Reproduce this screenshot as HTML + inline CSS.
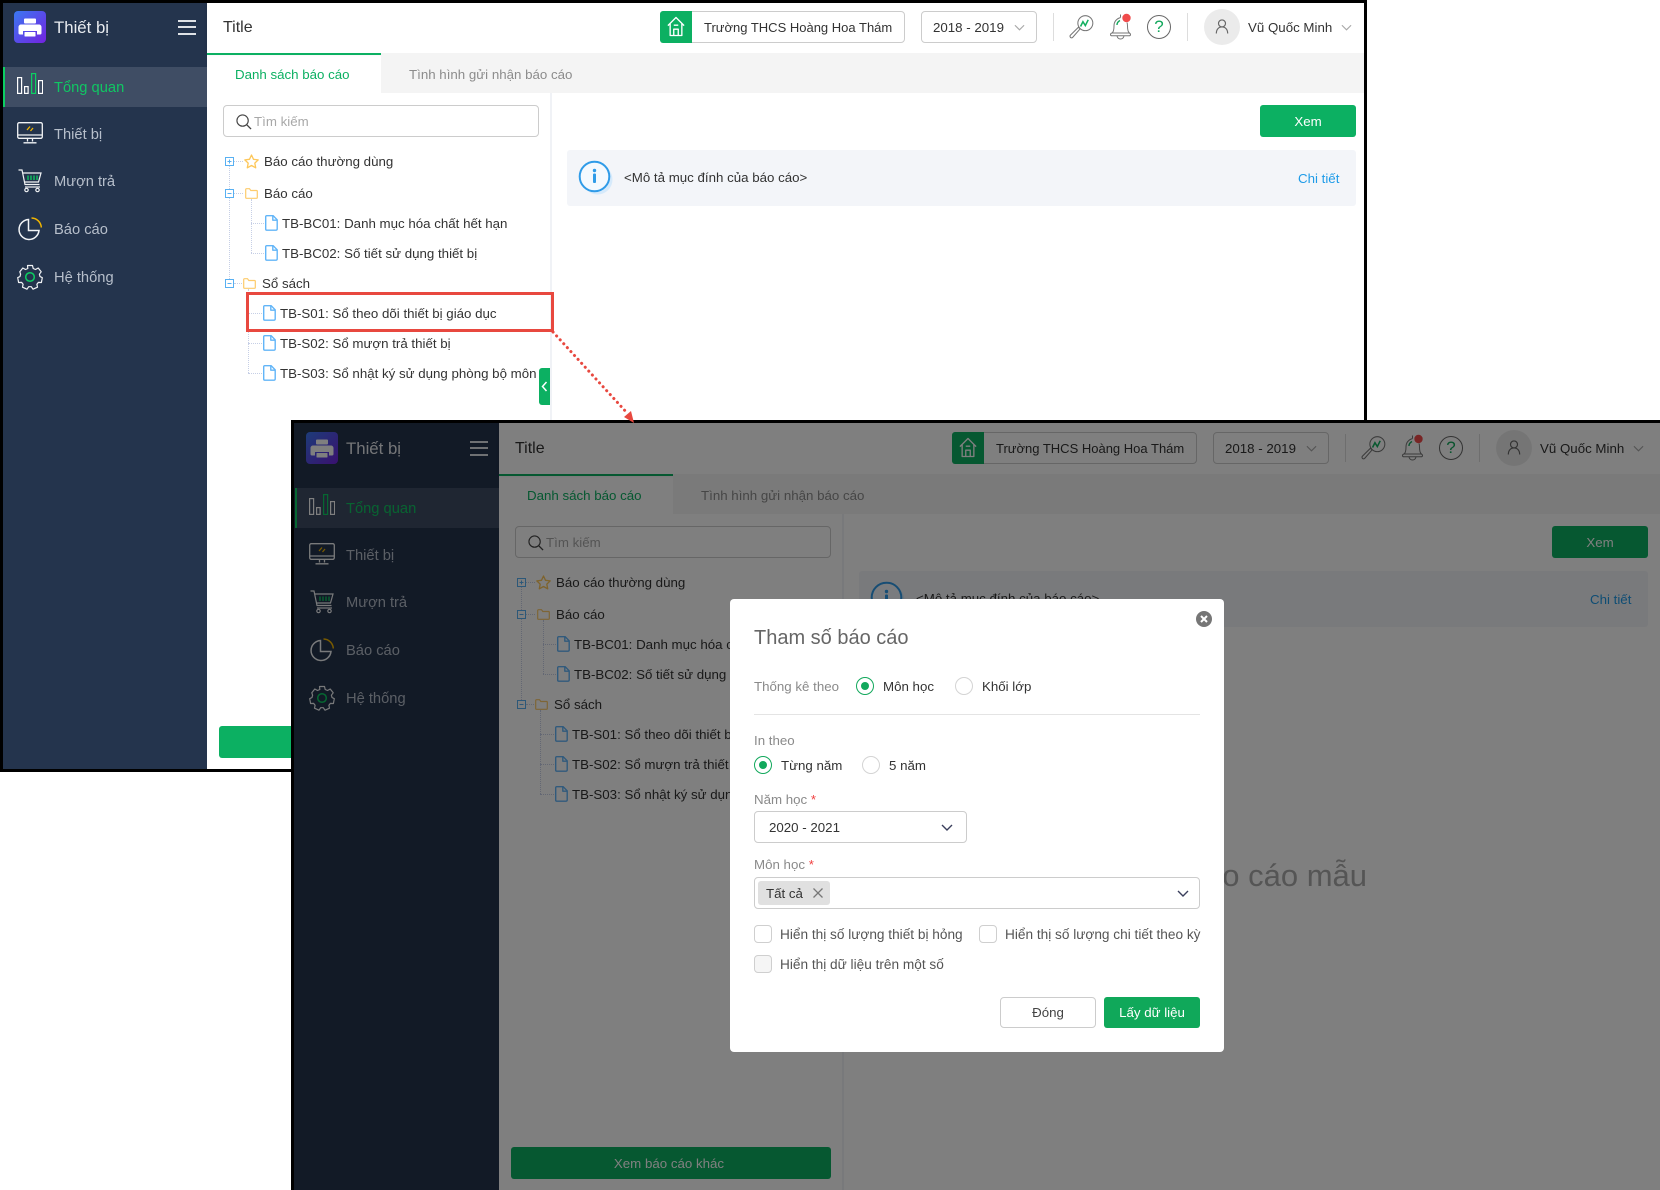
<!DOCTYPE html>
<html lang="vi">
<head>
<meta charset="utf-8">
<title>Thiết bị</title>
<style>
html,body{margin:0;padding:0;background:#fff;}
body{position:relative;width:1660px;height:1190px;overflow:hidden;font-family:"Liberation Sans","Noto Sans CJK SC",sans-serif;font-size:13.3px;color:#333;}
.win{position:absolute;background:#fff;overflow:hidden;}
.a{position:absolute;}
.t{position:absolute;white-space:nowrap;line-height:20px;height:20px;margin-top:1px;}
.side{position:absolute;left:0;top:0;width:207px;height:100%;background:#24344d;}
.row{position:absolute;left:3px;top:67px;width:204px;height:40px;background:#3f4d64;border-left:2px solid #0ccf62;box-sizing:border-box;}
.nav{color:#b7bfcb;font-size:14.7px;left:54px;}
.box{position:absolute;box-sizing:border-box;background:#fff;border:1px solid #ccc;border-radius:4px;}
.btn{position:absolute;background:#0cb062;color:#fff;text-align:center;border-radius:3px;}
.mask{position:absolute;left:0;top:0;width:100%;height:100%;background:rgba(0,0,0,.5);z-index:5;}
.blk{position:absolute;background:#000;z-index:8;}
.radio{position:absolute;box-sizing:border-box;width:18px;height:18px;border:1px solid #d4d4d4;border-radius:50%;background:#fff;}
.radio.on{border:1px solid #12a85c;}
.radio.on:after{content:"";position:absolute;left:4px;top:4px;width:8px;height:8px;border-radius:50%;background:#12a85c;}
.cb{position:absolute;box-sizing:border-box;width:18px;height:18px;border:1px solid #cfcfcf;border-radius:4px;background:#fff;}
.lab{color:#8a8a8a;}
.ck{color:#555;font-size:13.65px;}
</style>
</head>
<body>
<svg width="0" height="0" style="position:absolute">
<defs>
<symbol id="printer" viewBox="0 0 32 32"><rect x="10" y="7.500" width="12" height="5" rx="1" fill="#fff"/><path d="M7 13.500h18a2.500 2.500 0 0 1 2.500 2.500v6a1.500 1.500 0 0 1-1.500 1.500h-3v-3.500H9v3.500H6a1.500 1.500 0 0 1-1.500-1.500v-6A2.500 2.500 0 0 1 7 13.500z" fill="#fff"/><rect x="10.500" y="21" width="11" height="4.500" rx=".5" fill="#fff"/></symbol>
<symbol id="bars" viewBox="0 0 26 21"><g fill="none" stroke-width="1.200"><rect x=".6" y="4.600" width="4" height="15.800" stroke="#fff"/><rect x="7.600" y="13.600" width="3.500" height="6.800" stroke="#fff"/><rect x="14.600" y=".6" width="4" height="19.800" stroke="#0ccf62"/><rect x="21.600" y="7.600" width="4" height="12.800" stroke="#fff"/></g></symbol>
<symbol id="mon" viewBox="0 0 26 22"><g fill="none" stroke="#f2f4f6" stroke-width="1.300"><rect x=".7" y=".7" width="24.600" height="15.600" rx="1.500"/><path d="M.7 13h24.600M10.500 16.500v3M15.500 16.500v3M6.500 20.800h13"/></g><path d="M10 8l3-3.500M13.500 9l2.500-3" stroke="#f0b400" stroke-width="1.300" fill="none"/></symbol>
<symbol id="cart" viewBox="0 0 24 24"><g fill="none" stroke="#f2f4f6" stroke-width="1.200"><path d="M.5 1h3.500l3 14.500h14.500"/><path d="M4.500 4h18.500l-2.500 9H6.500"/><path d="M7 18h15"/><circle cx="8.500" cy="21" r="1.700"/><circle cx="19.500" cy="21" r="1.700"/></g><path d="M10 6.500v4.500M13 6.500v4.500M16 6.500v4.500M19 6.500v4.500" stroke="#0ccf62" stroke-width="1.300"/></symbol>
<symbol id="pie" viewBox="0 0 24 24"><g fill="none" stroke-width="1.500"><path d="M10.500 2.500a10 10 0 1 0 10.500 11H10.500z" stroke="#f2f4f6"/><path d="M13.500 1a10 10 0 0 1 9.800 9.500" stroke="#f0b400"/></g></symbol>
<symbol id="gear" viewBox="0 0 26 26"><path d="M10.500 1.500h5l.7 3 2.300 1 2.700-1.500 3 3.800-1.800 2.400.6 2.300 2.300 1.200-.9 4.800-3-.1-1.500 1.900.6 2.900-4.500 2-1.700-2.500h-2.600l-1.700 2.500-4.500-2 .6-2.900-1.500-1.900-3 .1-.9-4.800 2.300-1.200.6-2.300L2.800 7.800l3-3.800 2.700 1.500 2.300-1z" fill="none" stroke="#f2f4f6" stroke-width="1.200" stroke-linejoin="round"/><circle cx="13" cy="13" r="4.300" fill="none" stroke="#0ccf62" stroke-width="1.500"/></symbol>
<symbol id="file" viewBox="0 0 13 16"><path d="M1.700.7h6.500l4 4.200v9a1.300 1.300 0 0 1-1.300 1.300H1.700A1.200 1.200 0 0 1 .7 14V1.700A1 1 0 0 1 1.700.7zM7.800 1v4.200h4.200" fill="none" stroke="#62b5f8" stroke-width="1.400" stroke-linejoin="round"/></symbol>
<symbol id="folder" viewBox="0 0 13 11"><path d="M.7 1.500A.8.8 0 0 1 1.500.7h3l1.300 1.800h5.700a.8.8 0 0 1 .8.8v6.200a.8.8 0 0 1-.8.8h-10a.8.8 0 0 1-.8-.8z" fill="none" stroke="#fdcb6c" stroke-width="1.200"/></symbol>
<symbol id="star" viewBox="0 0 15 15"><path d="M7.500 1l2 4.300 4.700.6-3.400 3.200.9 4.700-4.200-2.300-4.200 2.300.9-4.700L.8 5.900l4.700-.6z" fill="none" stroke="#fdc75a" stroke-width="1.300" stroke-linejoin="round"/></symbol>
<symbol id="plus" viewBox="0 0 9 9"><rect x=".5" y=".5" width="8" height="8" fill="#fff" stroke="#58b0f2"/><path d="M2.500 4.500h4M4.500 2.500v4" stroke="#58b0f2"/></symbol>
<symbol id="minus" viewBox="0 0 9 9"><rect x=".5" y=".5" width="8" height="8" fill="#fff" stroke="#58b0f2"/><path d="M2.500 4.500h4" stroke="#58b0f2"/></symbol>
<symbol id="home" viewBox="0 0 20 24"><path d="M1 11L10 2l9 9M3.500 9v13h13V9M7.500 22v-7h5v7M7.500 10.500h5" fill="none" stroke="#fff" stroke-width="1.500" stroke-linejoin="round"/></symbol>
<symbol id="chev" viewBox="0 0 12 7"><path d="M1 1l5 5 5-5" fill="none" stroke="#a8a8a8" stroke-width="1.200"/></symbol>
<symbol id="chevd" viewBox="0 0 12 7"><path d="M1 1l5 5 5-5" fill="none" stroke="#3a3f5c" stroke-width="1.400"/></symbol>
<symbol id="key" viewBox="0 0 26 25"><circle cx="17" cy="8.500" r="7.800" fill="none" stroke="#777" stroke-width="1.100"/><path d="M11.500 14.500L9.800 12.800 1.500 21a1.500 1.500 0 0 0 2.300 2.300z" fill="none" stroke="#777" stroke-width="1.100"/><path d="M12 12l2.500-5 2.500 4 3-6" fill="none" stroke="#12b060" stroke-width="1.600"/></symbol>
<symbol id="bell" viewBox="0 0 23 27"><g fill="none" stroke="#777" stroke-width="1"><path d="M3 20c1.500-1 2-3 2-7 0-4 2-7 6.500-8.500M11.500 4.500V1.500"/><path d="M18 9.500c.5 1 .5 2 .5 3.500 0 4 .5 6 2 7"/><path d="M3 20c-2 .5-2 2.800 0 2.800h17c2 0 2-2.300 0-2.800z"/><path d="M8 23c.5 2 2 3 3.500 3s3-1 3.500-3"/></g><path d="M8 12c0-2 1-3.500 3-4.500" fill="none" stroke="#12a85c" stroke-width="1.400"/><circle cx="17.500" cy="5" r="4.200" fill="#f04b4b"/></symbol>
<symbol id="user" viewBox="0 0 16 18"><circle cx="8" cy="5.500" r="4" fill="none" stroke="#666" stroke-width="1.300"/><path d="M1.500 17c0-4.500 2.500-7.500 6.500-7.500s6.500 3 6.500 7.500" fill="none" stroke="#666" stroke-width="1.300"/></symbol>
<symbol id="search" viewBox="0 0 17 17"><circle cx="7" cy="7" r="6" fill="none" stroke="#444" stroke-width="1.200"/><path d="M11.500 11.500l4.500 4.500" stroke="#444" stroke-width="1.400"/></symbol>
<symbol id="info" viewBox="0 0 36 36"><circle cx="19.500" cy="19.500" r="15" fill="#d6eafb"/><circle cx="16.500" cy="16.500" r="14.800" fill="#f4f9fe" stroke="#2f9be8" stroke-width="2"/><circle cx="16.500" cy="10.500" r="1.700" fill="#2f9be8"/><rect x="15" y="13.500" width="3" height="9.500" rx="1" fill="#2f9be8"/></symbol>
</defs>
</svg>

<!-- WINDOW 1 -->
<div class="win" style="left:0;top:0;width:1367px;height:772px;">
  <div class="side">
    <div class="a" style="left:14px;top:11px;width:32px;height:32px;border-radius:4px;background:linear-gradient(135deg,#3a78f2,#7322e0);"><svg width="32" height="32"><use href="#printer"/></svg></div>
    <div class="t" style="left:54px;top:17px;font-size:16.8px;color:#e8ebef;">Thiết bị</div>
    <div class="a" style="left:178px;top:20px;width:18px;height:2px;background:#dfe2e6;"></div>
    <div class="a" style="left:178px;top:26px;width:18px;height:2px;background:#dfe2e6;"></div>
    <div class="a" style="left:178px;top:33px;width:18px;height:2px;background:#dfe2e6;"></div>
    <div class="row"></div>
    <svg class="a" style="left:17px;top:73px" width="26" height="21"><use href="#bars"/></svg>
    <div class="t nav" style="top:77px;color:#10c763;">Tổng quan</div>
    <svg class="a" style="left:17px;top:122px" width="26" height="22"><use href="#mon"/></svg>
    <div class="t nav" style="top:124px;">Thiết bị</div>
    <svg class="a" style="left:18px;top:169px" width="24" height="24"><use href="#cart"/></svg>
    <div class="t nav" style="top:171px;">Mượn trả</div>
    <svg class="a" style="left:18px;top:217px" width="24" height="24"><use href="#pie"/></svg>
    <div class="t nav" style="top:219px;">Báo cáo</div>
    <svg class="a" style="left:17px;top:264px" width="26" height="26"><use href="#gear"/></svg>
    <div class="t nav" style="top:267px;">Hệ thống</div>
  </div>
  <div class="a" style="left:207px;top:0;width:1170px;height:53px;background:#fff;box-shadow:0 1px 3px rgba(0,0,0,.12);"></div>
  <div class="t" style="left:223px;top:17px;font-size:16px;color:#333;">Title</div>
  <div class="box" style="left:660px;top:11px;width:245px;height:32px;"></div>
  <div class="a" style="left:660px;top:11px;width:32px;height:32px;background:#0cb062;border-radius:3px 0 0 3px;"><svg class="a" style="left:7px;top:4px" width="18" height="23"><use href="#home"/></svg></div>
  <div class="t" style="left:704px;top:17px;font-size:13px;">Trường THCS Hoàng Hoa Thám</div>
  <div class="box" style="left:921px;top:11px;width:116px;height:32px;"></div>
  <div class="t" style="left:933px;top:17px;">2018 - 2019</div>
  <svg class="a" style="left:1014px;top:24px" width="11" height="7"><use href="#chev"/></svg>
  <div class="a" style="left:1053px;top:13px;width:1px;height:28px;background:#ddd;"></div>
  <svg class="a" style="left:1069px;top:15px" width="25" height="24"><use href="#key"/></svg>
  <svg class="a" style="left:1109px;top:13px" width="23" height="27"><use href="#bell"/></svg>
  <div class="a" style="left:1147px;top:15px;width:22px;height:22px;border:1px solid #666;border-radius:50%;text-align:center;line-height:22px;font-size:17px;color:#12a85c;">?</div>
  <div class="a" style="left:1187px;top:13px;width:1px;height:28px;background:#ddd;"></div>
  <div class="a" style="left:1204px;top:9px;width:36px;height:36px;border-radius:50%;background:#ebebeb;"><svg class="a" style="left:11px;top:9px" width="14" height="17"><use href="#user"/></svg></div>
  <div class="t" style="left:1248px;top:17px;">Vũ Quốc Minh</div>
  <svg class="a" style="left:1341px;top:24px" width="11" height="7"><use href="#chev"/></svg>

  <div class="a" style="left:207px;top:53px;width:174px;height:2px;background:#0cb062;"></div>
  <div class="a" style="left:381px;top:53px;width:990px;height:40px;background:#f4f4f4;"></div>
  <div class="t" style="left:235px;top:64px;color:#0cb062;">Danh sách báo cáo</div>
  <div class="t" style="left:409px;top:64px;color:#8c8c8c;">Tình hình gửi nhận báo cáo</div>

  <div class="box" style="left:223px;top:105px;width:316px;height:32px;"></div>
  <svg class="a" style="left:236px;top:114px" width="16" height="16"><use href="#search"/></svg>
  <div class="t" style="left:254px;top:111px;color:#a8a8a8;">Tìm kiếm</div>

  <div class="a" style="left:229px;top:166px;height:117px;border-left:1px dotted #c6cfe6;"></div>
  <div class="a" style="left:234px;top:161px;width:9px;border-top:1px dotted #c6cfe6;"></div>
  <div class="a" style="left:234px;top:193px;width:9px;border-top:1px dotted #c6cfe6;"></div>
  <div class="a" style="left:234px;top:283px;width:8px;border-top:1px dotted #c6cfe6;"></div>
  <div class="a" style="left:251px;top:199px;height:54px;border-left:1px dotted #c6cfe6;"></div>
  <div class="a" style="left:251px;top:223px;width:13px;border-top:1px dotted #c6cfe6;"></div>
  <div class="a" style="left:251px;top:253px;width:13px;border-top:1px dotted #c6cfe6;"></div>
  <div class="a" style="left:248px;top:289px;height:84px;border-left:1px dotted #c6cfe6;"></div>
  <div class="a" style="left:248px;top:313px;width:14px;border-top:1px dotted #c6cfe6;"></div>
  <div class="a" style="left:248px;top:343px;width:14px;border-top:1px dotted #c6cfe6;"></div>
  <div class="a" style="left:248px;top:373px;width:14px;border-top:1px dotted #c6cfe6;"></div>
  <svg class="a" style="left:225px;top:157px" width="9" height="9"><use href="#plus"/></svg>
  <svg class="a" style="left:244px;top:154px" width="15" height="15"><use href="#star"/></svg>
  <div class="t" style="left:264px;top:151px;">Báo cáo thường dùng</div>
  <svg class="a" style="left:225px;top:189px" width="9" height="9"><use href="#minus"/></svg>
  <svg class="a" style="left:245px;top:188px" width="13" height="11"><use href="#folder"/></svg>
  <div class="t" style="left:264px;top:183px;">Báo cáo</div>
  <svg class="a" style="left:265px;top:215px" width="13" height="16"><use href="#file"/></svg>
  <div class="t" style="left:282px;top:213px;">TB-BC01: Danh mục hóa chất hết hạn</div>
  <svg class="a" style="left:265px;top:245px" width="13" height="16"><use href="#file"/></svg>
  <div class="t" style="left:282px;top:243px;">TB-BC02: Số tiết sử dụng thiết bị</div>
  <svg class="a" style="left:225px;top:279px" width="9" height="9"><use href="#minus"/></svg>
  <svg class="a" style="left:243px;top:278px" width="13" height="11"><use href="#folder"/></svg>
  <div class="t" style="left:262px;top:273px;">Sổ sách</div>
  <svg class="a" style="left:263px;top:305px" width="13" height="16"><use href="#file"/></svg>
  <div class="t" style="left:280px;top:303px;">TB-S01: Sổ theo dõi thiết bị giáo dục</div>
  <svg class="a" style="left:263px;top:335px" width="13" height="16"><use href="#file"/></svg>
  <div class="t" style="left:280px;top:333px;">TB-S02: Sổ mượn trả thiết bị</div>
  <svg class="a" style="left:263px;top:365px" width="13" height="16"><use href="#file"/></svg>
  <div class="t" style="left:280px;top:363px;">TB-S03: Sổ nhật ký sử dụng phòng bộ môn</div>

  <div class="a" style="left:550px;top:93px;width:2px;height:680px;background:#f0f2f6;"></div>
  <div class="a" style="left:539px;top:368px;width:11px;height:37px;background:#0cb062;border-radius:3px 0 0 3px;"><svg class="a" style="left:2px;top:13px" width="7" height="11"><path d="M5.500 1L1.500 5.500 5.500 10" fill="none" stroke="#fff" stroke-width="1.500"/></svg></div>
  <div class="btn" style="left:219px;top:726px;width:316px;height:32px;line-height:34px;padding-right:4px;">Xem báo cáo khác</div>

  <div class="btn" style="left:1260px;top:105px;width:96px;height:32px;line-height:34px;">Xem</div>
  <div class="a" style="left:567px;top:150px;width:789px;height:56px;background:#f3f5f9;border-radius:3px;"></div>
  <svg class="a" style="left:578px;top:160px;" width="36" height="36"><use href="#info"/></svg>
  <div class="t" style="left:624px;top:167px;">&lt;Mô tả mục đính của báo cáo&gt;</div>
  <div class="t" style="left:1298px;top:168px;color:#1e9be8;">Chi tiết</div>
</div>

<div class="blk" style="left:0;top:0;width:1367px;height:3px;"></div>
<div class="blk" style="left:0;top:0;width:3px;height:772px;"></div>
<div class="blk" style="left:1364px;top:0;width:3px;height:421px;"></div>
<div class="blk" style="left:0;top:769px;width:292px;height:3px;"></div>

<!-- red highlight -->
<div class="a" style="left:246px;top:292px;width:308px;height:40px;box-sizing:border-box;border:3px solid #e8483f;z-index:7;"></div>

<!-- WINDOW 2 -->
<div class="win" style="left:292px;top:421px;width:1368px;height:769px;z-index:6;">
  <div class="side">
    <div class="a" style="left:14px;top:11px;width:32px;height:32px;border-radius:4px;background:linear-gradient(135deg,#3a78f2,#7322e0);"><svg width="32" height="32"><use href="#printer"/></svg></div>
    <div class="t" style="left:54px;top:17px;font-size:16.8px;color:#e8ebef;">Thiết bị</div>
    <div class="a" style="left:178px;top:20px;width:18px;height:2px;background:#dfe2e6;"></div>
    <div class="a" style="left:178px;top:26px;width:18px;height:2px;background:#dfe2e6;"></div>
    <div class="a" style="left:178px;top:33px;width:18px;height:2px;background:#dfe2e6;"></div>
    <div class="row"></div>
    <svg class="a" style="left:17px;top:73px" width="26" height="21"><use href="#bars"/></svg>
    <div class="t nav" style="top:77px;color:#10c763;">Tổng quan</div>
    <svg class="a" style="left:17px;top:122px" width="26" height="22"><use href="#mon"/></svg>
    <div class="t nav" style="top:124px;">Thiết bị</div>
    <svg class="a" style="left:18px;top:169px" width="24" height="24"><use href="#cart"/></svg>
    <div class="t nav" style="top:171px;">Mượn trả</div>
    <svg class="a" style="left:18px;top:217px" width="24" height="24"><use href="#pie"/></svg>
    <div class="t nav" style="top:219px;">Báo cáo</div>
    <svg class="a" style="left:17px;top:264px" width="26" height="26"><use href="#gear"/></svg>
    <div class="t nav" style="top:267px;">Hệ thống</div>
  </div>
  <div class="a" style="left:207px;top:0;width:1170px;height:53px;background:#fff;box-shadow:0 1px 3px rgba(0,0,0,.12);"></div>
  <div class="t" style="left:223px;top:17px;font-size:16px;color:#333;">Title</div>
  <div class="box" style="left:660px;top:11px;width:245px;height:32px;"></div>
  <div class="a" style="left:660px;top:11px;width:32px;height:32px;background:#0cb062;border-radius:3px 0 0 3px;"><svg class="a" style="left:7px;top:4px" width="18" height="23"><use href="#home"/></svg></div>
  <div class="t" style="left:704px;top:17px;font-size:13px;">Trường THCS Hoàng Hoa Thám</div>
  <div class="box" style="left:921px;top:11px;width:116px;height:32px;"></div>
  <div class="t" style="left:933px;top:17px;">2018 - 2019</div>
  <svg class="a" style="left:1014px;top:24px" width="11" height="7"><use href="#chev"/></svg>
  <div class="a" style="left:1053px;top:13px;width:1px;height:28px;background:#ddd;"></div>
  <svg class="a" style="left:1069px;top:15px" width="25" height="24"><use href="#key"/></svg>
  <svg class="a" style="left:1109px;top:13px" width="23" height="27"><use href="#bell"/></svg>
  <div class="a" style="left:1147px;top:15px;width:22px;height:22px;border:1px solid #666;border-radius:50%;text-align:center;line-height:22px;font-size:17px;color:#12a85c;">?</div>
  <div class="a" style="left:1187px;top:13px;width:1px;height:28px;background:#ddd;"></div>
  <div class="a" style="left:1204px;top:9px;width:36px;height:36px;border-radius:50%;background:#ebebeb;"><svg class="a" style="left:11px;top:9px" width="14" height="17"><use href="#user"/></svg></div>
  <div class="t" style="left:1248px;top:17px;">Vũ Quốc Minh</div>
  <svg class="a" style="left:1341px;top:24px" width="11" height="7"><use href="#chev"/></svg>

  <div class="a" style="left:207px;top:53px;width:174px;height:2px;background:#0cb062;"></div>
  <div class="a" style="left:381px;top:53px;width:990px;height:40px;background:#f4f4f4;"></div>
  <div class="t" style="left:235px;top:64px;color:#0cb062;">Danh sách báo cáo</div>
  <div class="t" style="left:409px;top:64px;color:#8c8c8c;">Tình hình gửi nhận báo cáo</div>

  <div class="box" style="left:223px;top:105px;width:316px;height:32px;"></div>
  <svg class="a" style="left:236px;top:114px" width="16" height="16"><use href="#search"/></svg>
  <div class="t" style="left:254px;top:111px;color:#a8a8a8;">Tìm kiếm</div>

  <div class="a" style="left:229px;top:166px;height:117px;border-left:1px dotted #c6cfe6;"></div>
  <div class="a" style="left:234px;top:161px;width:9px;border-top:1px dotted #c6cfe6;"></div>
  <div class="a" style="left:234px;top:193px;width:9px;border-top:1px dotted #c6cfe6;"></div>
  <div class="a" style="left:234px;top:283px;width:8px;border-top:1px dotted #c6cfe6;"></div>
  <div class="a" style="left:251px;top:199px;height:54px;border-left:1px dotted #c6cfe6;"></div>
  <div class="a" style="left:251px;top:223px;width:13px;border-top:1px dotted #c6cfe6;"></div>
  <div class="a" style="left:251px;top:253px;width:13px;border-top:1px dotted #c6cfe6;"></div>
  <div class="a" style="left:248px;top:289px;height:84px;border-left:1px dotted #c6cfe6;"></div>
  <div class="a" style="left:248px;top:313px;width:14px;border-top:1px dotted #c6cfe6;"></div>
  <div class="a" style="left:248px;top:343px;width:14px;border-top:1px dotted #c6cfe6;"></div>
  <div class="a" style="left:248px;top:373px;width:14px;border-top:1px dotted #c6cfe6;"></div>
  <svg class="a" style="left:225px;top:157px" width="9" height="9"><use href="#plus"/></svg>
  <svg class="a" style="left:244px;top:154px" width="15" height="15"><use href="#star"/></svg>
  <div class="t" style="left:264px;top:151px;">Báo cáo thường dùng</div>
  <svg class="a" style="left:225px;top:189px" width="9" height="9"><use href="#minus"/></svg>
  <svg class="a" style="left:245px;top:188px" width="13" height="11"><use href="#folder"/></svg>
  <div class="t" style="left:264px;top:183px;">Báo cáo</div>
  <svg class="a" style="left:265px;top:215px" width="13" height="16"><use href="#file"/></svg>
  <div class="t" style="left:282px;top:213px;">TB-BC01: Danh mục hóa chất hết hạn</div>
  <svg class="a" style="left:265px;top:245px" width="13" height="16"><use href="#file"/></svg>
  <div class="t" style="left:282px;top:243px;">TB-BC02: Số tiết sử dụng thiết bị</div>
  <svg class="a" style="left:225px;top:279px" width="9" height="9"><use href="#minus"/></svg>
  <svg class="a" style="left:243px;top:278px" width="13" height="11"><use href="#folder"/></svg>
  <div class="t" style="left:262px;top:273px;">Sổ sách</div>
  <svg class="a" style="left:263px;top:305px" width="13" height="16"><use href="#file"/></svg>
  <div class="t" style="left:280px;top:303px;">TB-S01: Sổ theo dõi thiết bị giáo dục</div>
  <svg class="a" style="left:263px;top:335px" width="13" height="16"><use href="#file"/></svg>
  <div class="t" style="left:280px;top:333px;">TB-S02: Sổ mượn trả thiết bị</div>
  <svg class="a" style="left:263px;top:365px" width="13" height="16"><use href="#file"/></svg>
  <div class="t" style="left:280px;top:363px;">TB-S03: Sổ nhật ký sử dụng phòng bộ môn</div>

  <div class="a" style="left:550px;top:93px;width:2px;height:680px;background:#f0f2f6;"></div>
  <div class="btn" style="left:219px;top:726px;width:316px;height:32px;line-height:34px;padding-right:4px;">Xem báo cáo khác</div>

  <div class="btn" style="left:1260px;top:105px;width:96px;height:32px;line-height:34px;">Xem</div>
  <div class="a" style="left:567px;top:150px;width:789px;height:56px;background:#f3f5f9;border-radius:3px;"></div>
  <svg class="a" style="left:578px;top:160px;" width="36" height="36"><use href="#info"/></svg>
  <div class="t" style="left:624px;top:167px;">&lt;Mô tả mục đính của báo cáo&gt;</div>
  <div class="t" style="left:1298px;top:168px;color:#1e9be8;">Chi tiết</div>
  <div class="a" style="left:0;top:435px;width:1075px;height:40px;line-height:40px;text-align:right;font-size:31px;color:#aaa;white-space:nowrap;">Không có báo cáo mẫu</div>

  <div class="mask"></div>
</div>

<div class="blk" style="left:291px;top:420px;width:1369px;height:3px;"></div>
<div class="blk" style="left:291px;top:420px;width:3px;height:770px;"></div>

<!-- connector -->
<svg class="a" style="left:0;top:0;z-index:9;" width="1660" height="1190">
  <path d="M553 332L628 414" fill="none" stroke="#e8483f" stroke-width="3" stroke-linecap="round" stroke-dasharray="0.100 5.200"/>
  <path d="M634 423L624 417 631 411z" fill="#e8483f"/>
</svg>

<!-- MODAL -->
<div class="a" style="left:730px;top:599px;width:494px;height:453px;background:#fff;border-radius:4px;z-index:10;"></div>
<div style="position:absolute;left:0;top:0;z-index:11;">
  <svg class="a" style="left:1196px;top:611px" width="16" height="16"><circle cx="8" cy="8" r="8" fill="#767676"/><path d="M5 5l6 6M11 5l-6 6" stroke="#fff" stroke-width="2"/></svg>
  <div class="t" style="left:754px;top:627px;font-size:20px;color:#666;">Tham số báo cáo</div>
  <div class="t lab" style="left:754px;top:676px;">Thống kê theo</div>
  <div class="radio on" style="left:856px;top:677px;"></div>
  <div class="t" style="left:883px;top:676px;">Môn học</div>
  <div class="radio" style="left:955px;top:677px;"></div>
  <div class="t" style="left:982px;top:676px;">Khối lớp</div>
  <div class="a" style="left:754px;top:714px;width:446px;height:1px;background:#e4e4e4;"></div>
  <div class="t lab" style="left:754px;top:730px;">In theo</div>
  <div class="radio on" style="left:754px;top:756px;"></div>
  <div class="t" style="left:781px;top:755px;">Từng năm</div>
  <div class="radio" style="left:862px;top:756px;"></div>
  <div class="t" style="left:889px;top:755px;">5 năm</div>
  <div class="t lab" style="left:754px;top:789px;">Năm học <span style="color:#f04040;">*</span></div>
  <div class="box" style="left:754px;top:811px;width:213px;height:32px;"></div>
  <div class="t" style="left:769px;top:817px;">2020 - 2021</div>
  <svg class="a" style="left:941px;top:824px" width="12" height="7"><use href="#chevd"/></svg>
  <div class="t lab" style="left:754px;top:854px;">Môn học <span style="color:#f04040;">*</span></div>
  <div class="box" style="left:754px;top:877px;width:446px;height:32px;"></div>
  <div class="a" style="left:758px;top:881px;width:72px;height:24px;background:#e0e0e0;border-radius:3px;"></div>
  <div class="t" style="left:766px;top:883px;">Tất cả</div>
  <svg class="a" style="left:813px;top:888px" width="10" height="10"><path d="M.5 .5l9 9M9.500 .5l-9 9" stroke="#777" stroke-width="1.300"/></svg>
  <svg class="a" style="left:1177px;top:890px" width="12" height="7"><use href="#chevd"/></svg>
  <div class="cb" style="left:754px;top:925px;"></div>
  <div class="t ck" style="left:780px;top:924px;">Hiển thị số lượng thiết bị hỏng</div>
  <div class="cb" style="left:979px;top:925px;"></div>
  <div class="t ck" style="left:1005px;top:924px;">Hiển thị số lượng chi tiết theo kỳ</div>
  <div class="cb" style="left:754px;top:955px;background:#f5f5f5;"></div>
  <div class="t ck" style="left:780px;top:954px;">Hiển thị dữ liệu trên một số</div>
  <div class="box" style="left:1000px;top:997px;width:96px;height:31px;line-height:29px;text-align:center;color:#444;">Đóng</div>
  <div class="btn" style="left:1104px;top:997px;width:96px;height:31px;line-height:31px;background:#10a85a;">Lấy dữ liệu</div>
</div>
</body>
</html>
